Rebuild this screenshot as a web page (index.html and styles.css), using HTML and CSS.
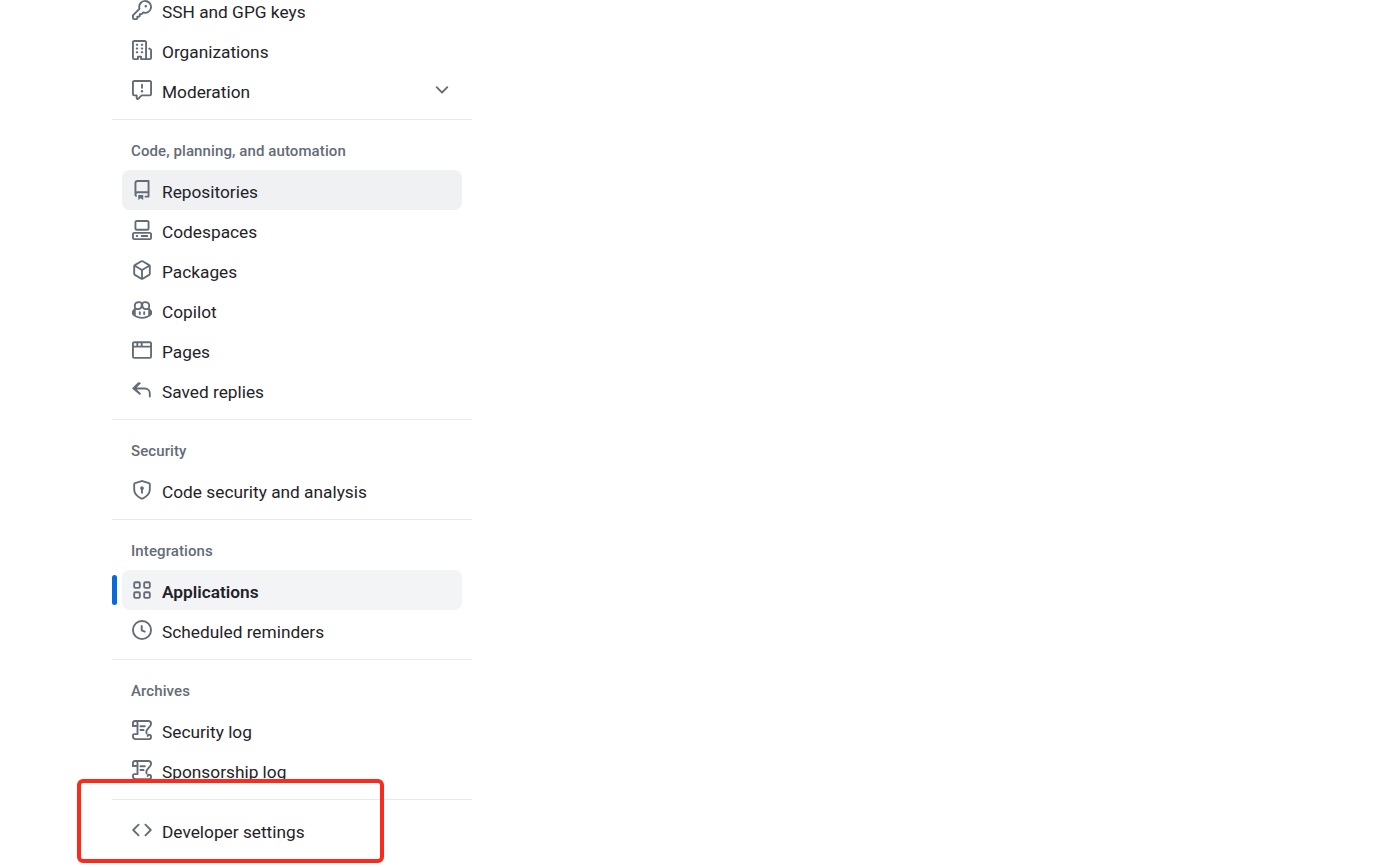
FILE: index.html
```html
<!DOCTYPE html>
<html lang="en">
<head>
    <meta charset="UTF-8">
    <meta name="viewport" content="width=device-width, initial-scale=1.0">
    <title>Settings</title>
    <link rel="stylesheet" href="styles.css">
</head>
<body>

    <nav class="sidebar">
        <div class="item">
            <svg class="icon" viewBox="0 0 16 16"><path d="M10.5 0a5.499 5.499 0 1 1-1.288 10.848l-.932.932a.75.75 0 0 1-.53.22H7v.75a.75.75 0 0 1-.22.53l-.5.5a.75.75 0 0 1-.53.22H5v.75a.75.75 0 0 1-.22.53l-.5.5a.75.75 0 0 1-.53.22h-2A1.75 1.75 0 0 1 0 14.25v-2c0-.199.079-.389.22-.53l4.932-4.932A5.5 5.5 0 0 1 10.5 0Zm-4 5.5c-.001.431.069.86.205 1.269a.75.75 0 0 1-.181.768L1.5 12.56v1.69c0 .138.112.25.25.25h1.69l.06-.06v-1.19a.75.75 0 0 1 .75-.75h1.19l.06-.06v-1.19a.75.75 0 0 1 .75-.75h1.19l1.023-1.025a.75.75 0 0 1 .768-.18A4 4 0 1 0 6.5 5.5ZM11 6a1 1 0 1 1 0-2 1 1 0 0 1 0 2Z"/></svg>
            <span class="label">SSH and GPG keys</span>
        </div>
        <div class="item">
            <svg class="icon" viewBox="0 0 16 16"><path d="M1.75 16A1.75 1.75 0 0 1 0 14.25V1.75C0 .784.784 0 1.75 0h8.5C11.216 0 12 .784 12 1.75v12.5c0 .085-.006.168-.018.25h2.268a.25.25 0 0 0 .25-.25V8.285a.25.25 0 0 0-.111-.208l-1.055-.703a.749.749 0 1 1 .832-1.248l1.055.703c.487.325.779.871.779 1.456v5.965A1.75 1.75 0 0 1 14.25 16h-3.5a.766.766 0 0 1-.197-.026c-.099.017-.2.026-.303.026h-3a.75.75 0 0 1-.75-.75V14h-1v1.25a.75.75 0 0 1-.75.75Zm-.25-1.75c0 .138.112.25.25.25H4v-1.25a.75.75 0 0 1 .75-.75h2.5a.75.75 0 0 1 .75.75v1.25h2.25a.25.25 0 0 0 .25-.25V1.75a.25.25 0 0 0-.25-.25h-8.5a.25.25 0 0 0-.25.25ZM3.75 6h.5a.75.75 0 0 1 0 1.5h-.5a.75.75 0 0 1 0-1.5ZM3 3.75A.75.75 0 0 1 3.75 3h.5a.75.75 0 0 1 0 1.5h-.5A.75.75 0 0 1 3 3.75Zm4 3A.75.75 0 0 1 7.75 6h.5a.75.75 0 0 1 0 1.5h-.5A.75.75 0 0 1 7 6.75ZM7.75 3h.5a.75.75 0 0 1 0 1.5h-.5a.75.75 0 0 1 0-1.5ZM3 9.75A.75.75 0 0 1 3.75 9h.5a.75.75 0 0 1 0 1.5h-.5A.75.75 0 0 1 3 9.75ZM7.75 9h.5a.75.75 0 0 1 0 1.5h-.5a.75.75 0 0 1 0-1.5Z"/></svg>
            <span class="label">Organizations</span>
        </div>
        <div class="item">
            <svg class="icon" viewBox="0 0 16 16"><path d="M0 1.75C0 .784.784 0 1.75 0h12.5C15.216 0 16 .784 16 1.75v9.5A1.75 1.75 0 0 1 14.25 13H8.06l-2.573 2.573A1.458 1.458 0 0 1 3 14.543V13H1.75A1.75 1.75 0 0 1 0 11.25Zm1.75-.25a.25.25 0 0 0-.25.25v9.5c0 .138.112.25.25.25h2a.75.75 0 0 1 .75.75v2.19l2.72-2.72a.749.749 0 0 1 .53-.22h6.5a.25.25 0 0 0 .25-.25v-9.5a.25.25 0 0 0-.25-.25Zm7 2.25v2.5a.75.75 0 0 1-1.5 0v-2.5a.75.75 0 0 1 1.5 0ZM9 9a1 1 0 1 1-2 0 1 1 0 0 1 2 0Z"/></svg>
            <span class="label">Moderation</span>
            <svg class="icon chevron" viewBox="0 0 16 16"><path d="M12.78 5.22a.749.749 0 0 1 0 1.06l-4.25 4.25a.749.749 0 0 1-1.06 0L3.22 6.28a.749.749 0 1 1 1.06-1.06L8 8.939l3.72-3.719a.749.749 0 0 1 1.06 0Z"/></svg>
        </div>

        <div class="divider"></div>
        <h2 class="heading">Code, planning, and automation</h2>
        <div class="item hovered">
            <svg class="icon" viewBox="0 0 16 16"><path d="M2 2.5A2.5 2.5 0 0 1 4.5 0h8.75a.75.75 0 0 1 .75.75v12.5a.75.75 0 0 1-.75.75h-2.5a.75.75 0 0 1 0-1.5h1.75v-2h-8a1 1 0 0 0-.714 1.7.75.75 0 1 1-1.072 1.05A2.495 2.495 0 0 1 2 11.5Zm10.5-1h-8a1 1 0 0 0-1 1v6.708A2.486 2.486 0 0 1 4.5 9h8ZM5 12.25a.25.25 0 0 1 .25-.25h3.5a.25.25 0 0 1 .25.25v3.25a.25.25 0 0 1-.4.2l-1.45-1.087a.249.249 0 0 0-.3 0L5.4 15.7a.25.25 0 0 1-.4-.2Z"/></svg>
            <span class="label">Repositories</span>
        </div>
        <div class="item">
            <svg class="icon" viewBox="0 0 16 16"><path d="M0 11.25c0-.966.784-1.75 1.75-1.75h12.5c.966 0 1.75.784 1.75 1.75v3A1.75 1.75 0 0 1 14.25 16H1.75A1.75 1.75 0 0 1 0 14.25Zm2-9.5C2 .784 2.784 0 3.75 0h8.5C13.216 0 14 .784 14 1.75v5a1.75 1.75 0 0 1-1.75 1.75h-8.5A1.75 1.75 0 0 1 2 6.75Zm1.75-.25a.25.25 0 0 0-.25.25v5c0 .138.112.25.25.25h8.5a.25.25 0 0 0 .25-.25v-5a.25.25 0 0 0-.25-.25Zm-2 9.5a.25.25 0 0 0-.25.25v3c0 .138.112.25.25.25h12.5a.25.25 0 0 0 .25-.25v-3a.25.25 0 0 0-.25-.25Z"/><path d="M7 12.75a.75.75 0 0 1 .75-.75h4.5a.75.75 0 0 1 0 1.5h-4.5a.75.75 0 0 1-.75-.75Zm-4 0a.75.75 0 0 1 .75-.75h.5a.75.75 0 0 1 0 1.5h-.5a.75.75 0 0 1-.75-.75Z"/></svg>
            <span class="label">Codespaces</span>
        </div>
        <div class="item">
            <svg class="icon" viewBox="0 0 16 16"><path d="m8.878.392 5.25 3.045c.54.314.872.89.872 1.514v6.098a1.75 1.75 0 0 1-.872 1.514l-5.25 3.045a1.75 1.75 0 0 1-1.756 0l-5.25-3.045A1.75 1.75 0 0 1 1 11.049V4.951c0-.624.332-1.201.872-1.514L7.122.392a1.75 1.75 0 0 1 1.756 0ZM7.875 1.69l-4.63 2.685L8 7.133l4.755-2.758-4.63-2.685a.248.248 0 0 0-.25 0ZM2.5 5.677v5.372c0 .09.047.171.125.216l4.625 2.683V8.432Zm6.25 8.271 4.625-2.683a.25.25 0 0 0 .125-.216V5.677L8.75 8.432Z"/></svg>
            <span class="label">Packages</span>
        </div>
        <div class="item">
            <svg class="icon" viewBox="0 0 16 16"><path d="M7.998 15.035c-4.562 0-7.873-2.914-7.998-3.749V9.338c.085-.628.677-1.686 1.588-2.065.013-.07.024-.143.036-.218.029-.183.06-.384.126-.612-.201-.508-.254-1.084-.254-1.656 0-.87.128-1.769.693-2.484.579-.733 1.494-1.124 2.724-1.261 1.206-.134 2.262.034 2.944.765.05.053.096.108.139.165.044-.057.094-.112.143-.165.682-.731 1.738-.899 2.944-.765 1.23.137 2.145.528 2.724 1.261.566.715.693 1.614.693 2.484 0 .572-.053 1.148-.254 1.656.066.228.098.429.126.612.012.076.024.148.037.218.924.385 1.522 1.471 1.591 2.095v1.872c0 .766-3.351 3.795-8.002 3.795Zm0-1.485c2.28 0 4.584-1.11 5.002-1.433V7.862l-.023-.116c-.49.21-1.075.291-1.727.291-1.146 0-2.059-.327-2.71-.991A3.222 3.222 0 0 1 8 6.303a3.24 3.24 0 0 1-.544.743c-.65.664-1.563.991-2.71.991-.652 0-1.236-.081-1.727-.291l-.023.116v4.255c.419.323 2.722 1.433 5.002 1.433ZM6.762 2.83c-.193-.206-.637-.413-1.682-.297-1.019.113-1.479.404-1.713.7-.247.312-.369.789-.369 1.554 0 .793.129 1.171.308 1.371.162.181.519.379 1.442.379.853 0 1.339-.235 1.638-.54.315-.322.527-.827.617-1.553.117-.935-.037-1.395-.241-1.614Zm4.155-.297c-1.044-.116-1.488.091-1.681.297-.204.219-.359.679-.242 1.614.091.726.303 1.231.618 1.553.299.305.784.54 1.638.54.922 0 1.28-.198 1.442-.379.179-.2.308-.578.308-1.371 0-.765-.123-1.242-.37-1.554-.233-.296-.693-.587-1.713-.7Z"/><path d="M6.25 9.037a.75.75 0 0 1 .75.75v1.501a.75.75 0 0 1-1.5 0V9.787a.75.75 0 0 1 .75-.75Zm4.25.75v1.501a.75.75 0 0 1-1.5 0V9.787a.75.75 0 0 1 1.5 0Z"/></svg>
            <span class="label">Copilot</span>
        </div>
        <div class="item">
            <svg class="icon" viewBox="0 0 16 16"><path d="M0 2.75C0 1.784.784 1 1.75 1h12.5c.966 0 1.75.784 1.75 1.75v10.5A1.75 1.75 0 0 1 14.25 15H1.75A1.75 1.75 0 0 1 0 13.25ZM14.5 6h-13v7.25c0 .138.112.25.25.25h12.5a.25.25 0 0 0 .25-.25Zm-6-3.5v2h6V2.75a.25.25 0 0 0-.25-.25ZM5 2.5v2h2v-2Zm-3.25 0a.25.25 0 0 0-.25.25V4.5h2v-2Z"/></svg>
            <span class="label">Pages</span>
        </div>
        <div class="item">
            <svg class="icon" viewBox="0 0 16 16"><path d="M6.78 1.97a.75.75 0 0 1 0 1.06L3.81 6h6.44A4.75 4.75 0 0 1 15 10.75v2.5a.75.75 0 0 1-1.5 0v-2.5a3.25 3.25 0 0 0-3.25-3.25H3.81l2.97 2.97a.749.749 0 1 1-1.06 1.06L.47 7.28a.75.75 0 0 1 0-1.06l4.25-4.25a.75.75 0 0 1 1.06 0Z"/></svg>
            <span class="label">Saved replies</span>
        </div>

        <div class="divider"></div>
        <h2 class="heading">Security</h2>
        <div class="item">
            <svg class="icon" viewBox="0 0 16 16"><path d="m8.533.133 5.25 1.68A1.75 1.75 0 0 1 15 3.48V7c0 1.566-.32 3.182-1.303 4.682-.983 1.498-2.585 2.813-5.032 3.855a1.697 1.697 0 0 1-1.33 0c-2.447-1.042-4.049-2.357-5.032-3.855C1.32 10.182 1 8.566 1 7V3.48a1.75 1.75 0 0 1 1.217-1.667l5.25-1.68a1.748 1.748 0 0 1 1.066 0Zm-.61 1.429.001.001-5.25 1.68a.251.251 0 0 0-.174.237V7c0 1.36.275 2.666 1.057 3.859.784 1.194 2.121 2.342 4.366 3.298a.196.196 0 0 0 .154 0c2.245-.957 3.582-2.103 4.366-3.297C13.225 9.666 13.5 8.358 13.5 7V3.48a.25.25 0 0 0-.174-.238l-5.25-1.68a.25.25 0 0 0-.153 0ZM9.5 6.5c0 .536-.286 1.032-.75 1.3v2.45a.75.75 0 0 1-1.5 0V7.8A1.5 1.5 0 1 1 9.5 6.5Z"/></svg>
            <span class="label">Code security and analysis</span>
        </div>

        <div class="divider"></div>
        <h2 class="heading">Integrations</h2>
        <div class="item current">
            <svg class="icon" viewBox="0 0 16 16"><path fill-rule="evenodd" d="M2.75 1h2.5A1.75 1.75 0 0 1 7 2.75v2.5A1.75 1.75 0 0 1 5.25 7h-2.5A1.75 1.75 0 0 1 1 5.25v-2.5A1.75 1.75 0 0 1 2.75 1Zm0 1.5a.25.25 0 0 0-.25.25v2.5c0 .138.112.25.25.25h2.5a.25.25 0 0 0 .25-.25v-2.5a.25.25 0 0 0-.25-.25Zm8 -1.5h2.5A1.75 1.75 0 0 1 15 2.75v2.5A1.75 1.75 0 0 1 13.25 7h-2.5A1.75 1.75 0 0 1 9 5.25v-2.5A1.75 1.75 0 0 1 10.75 1Zm0 1.5a.25.25 0 0 0-.25.25v2.5c0 .138.112.25.25.25h2.5a.25.25 0 0 0 .25-.25v-2.5a.25.25 0 0 0-.25-.25ZM2.75 9h2.5A1.75 1.75 0 0 1 7 10.75v2.5A1.75 1.75 0 0 1 5.25 15h-2.5A1.75 1.75 0 0 1 1 13.25v-2.5A1.75 1.75 0 0 1 2.75 9Zm0 1.5a.25.25 0 0 0-.25.25v2.5c0 .138.112.25.25.25h2.5a.25.25 0 0 0 .25-.25v-2.5a.25.25 0 0 0-.25-.25Zm8-1.5h2.5A1.75 1.75 0 0 1 15 10.75v2.5A1.75 1.75 0 0 1 13.25 15h-2.5A1.75 1.75 0 0 1 9 13.25v-2.5A1.75 1.75 0 0 1 10.75 9Zm0 1.5a.25.25 0 0 0-.25.25v2.5c0 .138.112.25.25.25h2.5a.25.25 0 0 0 .25-.25v-2.5a.25.25 0 0 0-.25-.25Z"/></svg>
            <span class="label">Applications</span>
        </div>
        <div class="item">
            <svg class="icon" viewBox="0 0 16 16"><path d="M8 0a8 8 0 1 1 0 16A8 8 0 0 1 8 0ZM1.5 8a6.5 6.5 0 1 0 13 0 6.5 6.5 0 0 0-13 0Zm7-3.25v2.992l2.028.812a.75.75 0 0 1-.557 1.392l-2.5-1A.751.751 0 0 1 7 8.25v-3.5a.75.75 0 0 1 1.5 0Z"/></svg>
            <span class="label">Scheduled reminders</span>
        </div>

        <div class="divider"></div>
        <h2 class="heading">Archives</h2>
        <div class="item">
            <svg class="icon scroll" viewBox="0 0 16 16"><path d="M.75 4.75V2.6A1.85 1.85 0 0 1 2.6.75h10.4a2.25 2.25 0 0 1 2.25 2.25c0 1.2-.8 2-1.6 2.9L11.6 8.4v2.4"/><path d="M2.6.75A1.85 1.85 0 0 1 4.4 2.6V11.25H1.9c-.7 0-1.15.55-1.15 1.2v.5c0 1.25 1 2.3 2.25 2.3h10.5a1.75 1.75 0 0 0 1.75-1.75c0-1-.8-1.75-1.75-1.75-.6 0-1 .4-1 1M.75 4.75H4.4M6.75 5h3.5M6.75 8h2.5"/></svg>
            <span class="label">Security log</span>
        </div>
        <div class="item">
            <svg class="icon scroll" viewBox="0 0 16 16"><path d="M.75 4.75V2.6A1.85 1.85 0 0 1 2.6.75h10.4a2.25 2.25 0 0 1 2.25 2.25c0 1.2-.8 2-1.6 2.9L11.6 8.4v2.4"/><path d="M2.6.75A1.85 1.85 0 0 1 4.4 2.6V11.25H1.9c-.7 0-1.15.55-1.15 1.2v.5c0 1.25 1 2.3 2.25 2.3h10.5a1.75 1.75 0 0 0 1.75-1.75c0-1-.8-1.75-1.75-1.75-.6 0-1 .4-1 1M.75 4.75H4.4M6.75 5h3.5M6.75 8h2.5"/></svg>
            <span class="label">Sponsorship log</span>
        </div>

        <div class="divider last"></div>
        <div class="item">
            <svg class="icon" viewBox="0 0 16 16"><path d="m11.28 3.22 4.25 4.25a.75.75 0 0 1 0 1.06l-4.25 4.25a.749.749 0 0 1-1.275-.326.749.749 0 0 1 .215-.734L13.94 8l-3.72-3.72a.749.749 0 0 1 .326-1.275.749.749 0 0 1 .734.215Zm-6.56 0a.751.751 0 0 1 1.042.018.751.751 0 0 1 .018 1.042L2.06 8l3.72 3.72a.749.749 0 0 1-.326 1.275.749.749 0 0 1-.734-.215L.47 8.53a.75.75 0 0 1 0-1.06Z"/></svg>
            <span class="label">Developer settings</span>
        </div>
    </nav>

    <!-- Red annotation box drawn over the screenshot -->
    <div class="callout"></div>

</body>
</html>
```

FILE: styles.css
```css
html, body {
    height: 867px;
    overflow: hidden;
}

body {
    margin: 0;
    background-color: #fff;
    color: #1f2328;
    font-family: Roboto, "Noto Sans", sans-serif;
    font-size: 17.3px;
}

.sidebar {
    width: 360px;
    margin: -10px 0 0 112px;
}

.item {
    position: relative;
    display: flex;
    align-items: center;
    gap: 10px;
    height: 40px;
    margin: 0 10px;
    padding: 0 10px;
    border-radius: 7.5px;
}

.label {
    padding-top: 4px;
    line-height: 36px;
}

.item.hovered {
    background-color: #eff1f3;
}

.item.current {
    background-color: #f3f4f6;
    font-weight: 600;
}

/* blue marker left of the selected row */
.item.current::before {
    content: "";
    position: absolute;
    left: -10px;
    top: 5px;
    width: 5px;
    height: 30px;
    border-radius: 5px;
    background-color: #0969da;
}

.icon {
    flex: none;
    width: 20px;
    height: 20px;
    fill: #636c76;
}

.icon.scroll {
    fill: none;
    stroke: #636c76;
    stroke-width: 1.5;
    stroke-linecap: round;
    stroke-linejoin: round;
}

.chevron {
    margin-left: auto;
}

.divider {
    height: 1px;
    margin-top: 9px;
    background-color: #e8e9eb;
}

.divider.last {
    margin-bottom: 10px;
}

.heading {
    margin: 0;
    padding: 21px 19px 9px;
    color: #636c76;
    font-size: 15px;
    font-weight: 500;
    letter-spacing: .1px;
    line-height: 20px;
}

.callout {
    position: absolute;
    left: 77px;
    top: 779px;
    width: 299px;
    height: 76px;
    border: 4px solid #fb2a1c;
    border-radius: 6px;
}
```
